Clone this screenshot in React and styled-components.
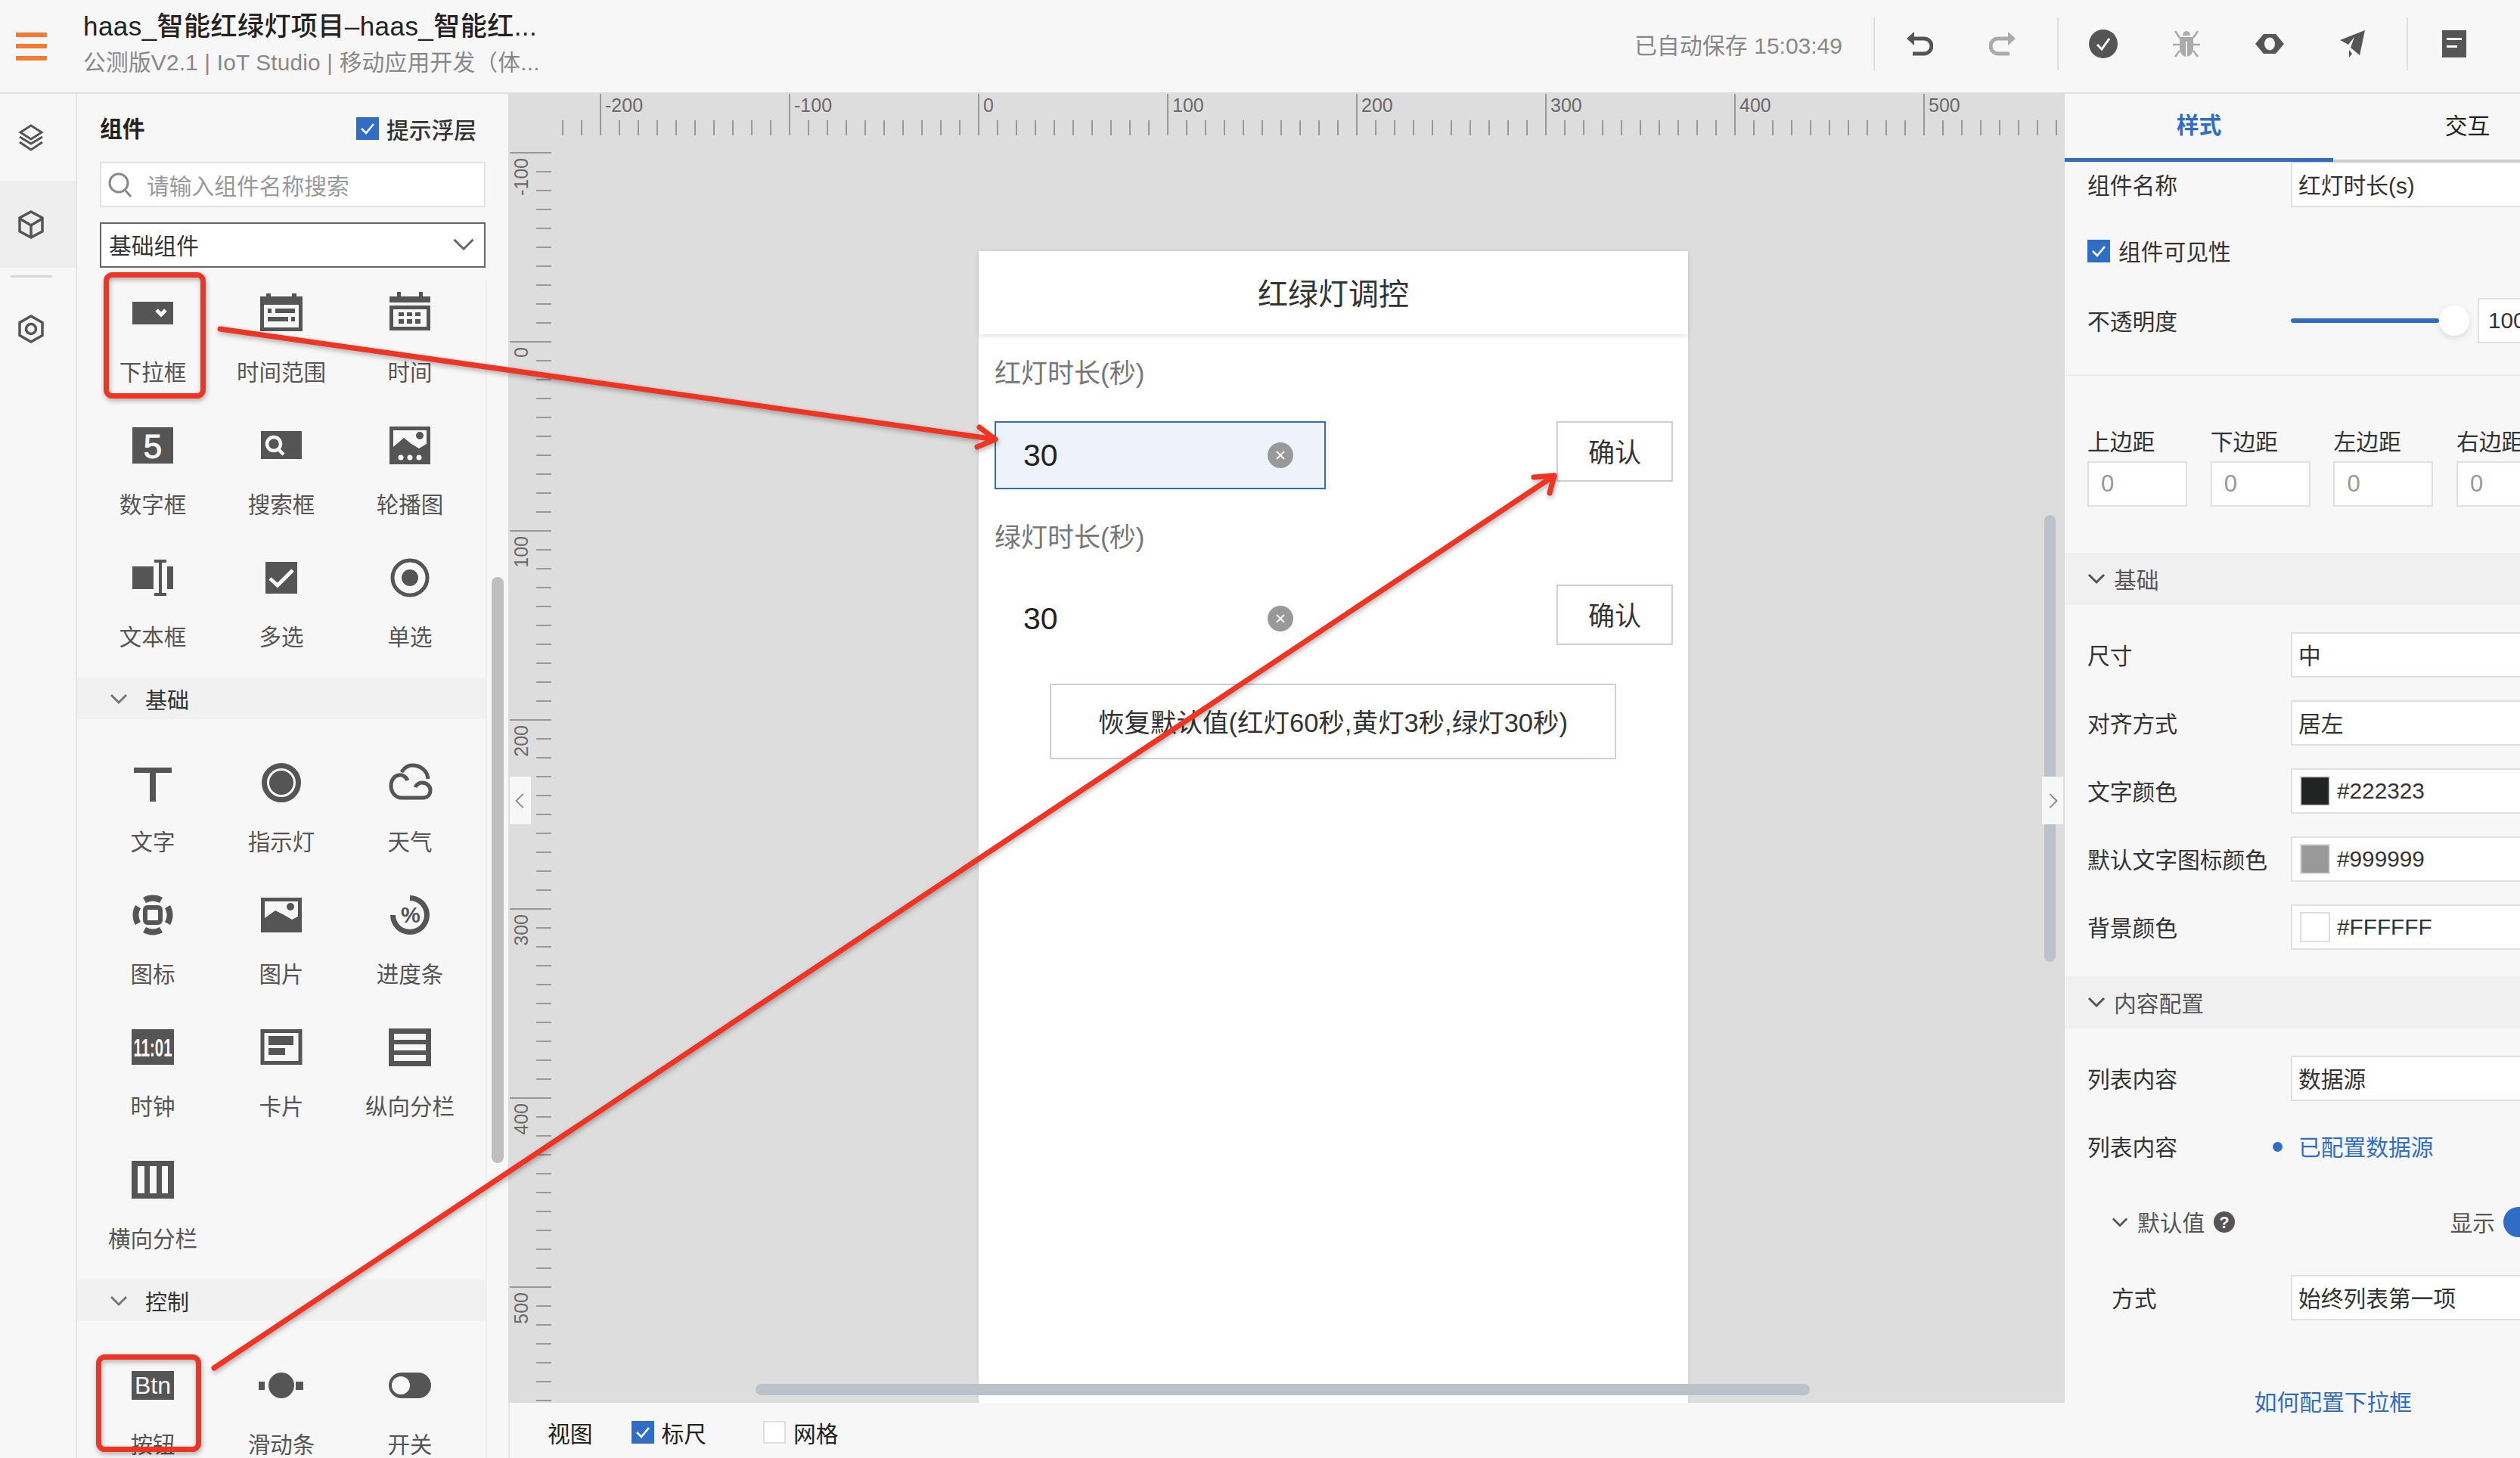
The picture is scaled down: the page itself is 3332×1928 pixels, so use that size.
import React from 'react';
import styled, { createGlobalStyle } from 'styled-components';

const BLUE = '#2f6dc6';
const FONT = '"Liberation Sans", "Noto Sans CJK SC", sans-serif';

const GlobalStyle = createGlobalStyle`
  html, body {
    margin: 0;
    padding: 0;
    background: #f7f7f7;
  }
  body {
    font-family: ${FONT};
    font-size: 29.75px;
    color: #333;
  }
  * {
    box-sizing: border-box;
  }
`;

const Page = styled.div`
  position: relative;
  width: 3332px;
  height: 1928px;
  overflow: hidden;
  display: flex;
  flex-direction: column;
`;

/* top bar */
const TopBar = styled.header`
  flex: none;
  height: 124px;
  display: flex;
  align-items: flex-start;
  padding: 0 32px 0 21px;
  background: #f7f7f7;
  border-bottom: 2px solid #e0e0e0;
`;

const MenuIcon = styled.svg`
  flex: none;
  margin: 43px 48px 0 0;
`;

const TitleBlock = styled.div`
  padding-top: 12px;
  white-space: nowrap;
`;

const ProjectName = styled.div`
  font-size: 35px;
  font-weight: 500;
  line-height: 46px;
  letter-spacing: 0.45px;
  color: #222;
`;

const ProjectMeta = styled.div`
  font-size: 29.75px;
  line-height: 50px;
  letter-spacing: 0.2px;
  color: #888;
`;

const TopActions = styled.div`
  margin-left: auto;
  height: 116px;
  display: flex;
  align-items: center;
`;

const SaveTime = styled.span`
  font-size: 30px;
  color: #888;
  margin-right: 41px;
  white-space: nowrap;
`;

const TopDivider = styled.span`
  width: 2px;
  height: 70px;
  background: #e0e0e0;
`;

const TopButton = styled.span`
  width: 110px;
  display: flex;
  justify-content: center;
  align-items: center;
`;

const UndoGroup = styled.div`
  display: flex;
  padding: 0 17px 0 4px;
`;

const PreviewGroup = styled.div`
  display: flex;
  padding: 0 16px 0 4px;
`;

const DocGroup = styled.div`
  display: flex;
  padding-left: 6px;
`;

/* main columns */
const Workspace = styled.div`
  flex: 1;
  min-height: 0;
  display: flex;
`;

const Rail = styled.nav`
  flex: none;
  width: 102px;
  border-right: 2px solid #e6e6e6;
  background: #f7f7f7;
`;

const RailItem = styled.div`
  height: 115px;
  display: flex;
  align-items: center;
  justify-content: center;
  padding-right: 18px;
  background: ${p => (p.$active ? '#eeeeee' : 'transparent')};
  margin-top: ${p => p.$gap || 0}px;
`;

const RailDivider = styled.div`
  width: 55px;
  height: 3px;
  margin: 10px 0 0 14px;
  background: #d9d9d9;
`;

const Palette = styled.aside`
  position: relative;
  flex: none;
  width: 570px;
  display: flex;
  flex-direction: column;
  background: #f7f7f7;
`;

const PaletteTop = styled.div`
  flex: none;
  padding: 16px 30px 17px;
`;

const PaletteHead = styled.div`
  height: 60px;
  display: flex;
  align-items: center;
  justify-content: space-between;
  padding-right: 12px;
`;

const PaletteTitle = styled.span`
  padding-bottom: 4px;
  font-weight: 700;
  color: #222;
`;

const HintToggle = styled.label`
  display: flex;
  align-items: center;
  gap: 10px;
  font-weight: 500;
  color: #333;
`;

const Check = styled.span`
  flex: none;
  width: 30px;
  height: 30px;
  display: flex;
  align-items: center;
  justify-content: center;
  background: ${p => (p.$on ? BLUE : '#fff')};
  border: ${p => (p.$on ? 'none' : '2px solid #e0e0e0')};
`;

const SearchBox = styled.div`
  width: 510px;
  height: 60px;
  margin-top: 14px;
  display: flex;
  align-items: center;
  gap: 19px;
  padding-left: 9px;
  background: #fff;
  border: 2px solid #e2e2e2;
  color: #999;
`;

const SelectBox = styled.div`
  width: 510px;
  height: 60px;
  margin-top: 20px;
  display: flex;
  align-items: center;
  justify-content: space-between;
  padding: 0 12px 2px 10px;
  background: #fff;
  border: 2px solid #666;
  color: #333;
`;

const PaletteList = styled.div`
  flex: 1;
  min-height: 0;
  width: 542px;
  overflow: hidden;
  border-right: 2px solid #eeeeee;
`;

const PaletteGroup = styled.div`
  display: grid;
  grid-template-columns: repeat(3, 170px);
  padding: ${p => p.$top || 0}px 0 0 15px;
`;

const PaletteItem = styled.div`
  height: 175px;
  padding-top: 13px;
  display: flex;
  flex-direction: column;
  align-items: center;
  color: #555;
  font-size: 29.5px;
  line-height: 40px;
`;

const ItemLabel = styled.span`
  margin-top: 29px;
  white-space: nowrap;
`;

const GroupTitle = styled.div`
  height: 55px;
  display: flex;
  align-items: center;
  gap: 23px;
  padding-left: 43px;
  background: #f1f1f1;
  color: #333;
  font-size: 29px;
`;

const PaletteScroll = styled.div`
  position: absolute;
  left: 548px;
  top: 639px;
  width: 16px;
  height: 775px;
  border-radius: 8px;
  background: #bfbfbf;
`;

/* canvas */
const Canvas = styled.main`
  position: relative;
  flex: 1;
  min-width: 0;
  display: grid;
  grid-template-columns: 57px 1fr;
  grid-template-rows: 55px 1fr 73px;
  background: #dddddd;
`;

const RulerCorner = styled.div`
  grid-column: 1 / 3;
`;

const RulerText = styled.text`
  font-family: ${FONT};
  font-size: 25px;
  fill: #6a6a6a;
`;

const Stage = styled.div`
  min-height: 0;
  overflow: hidden;
  padding: 153px 0 0 565px;
`;

const Phone = styled.section`
  width: 938px;
  height: 1600px;
  background: #fff;
  box-shadow: 0 0 6px rgba(0, 0, 0, 0.06);
`;

const PhoneHead = styled.div`
  height: 110px;
  padding-bottom: 3px;
  display: flex;
  align-items: center;
  justify-content: center;
  font-size: 40px;
  color: #333;
  box-shadow: 0 3px 6px rgba(0, 0, 0, 0.1);
`;

const PhoneBody = styled.div`
  padding: 0 20px 0 21px;
`;

const FieldTitle = styled.div`
  margin-top: ${p => p.$top}px;
  font-size: 35px;
  line-height: 50px;
  color: #777;
`;

const InputRow = styled.div`
  margin-top: ${p => p.$top}px;
  display: flex;
  justify-content: space-between;
  align-items: flex-start;
`;

const PhoneInput = styled.div`
  width: 438px;
  height: 90px;
  display: flex;
  align-items: center;
  justify-content: space-between;
  padding: 0 41px 0 36px;
  font-size: 41px;
  color: #222;
  background: ${p => (p.$focus ? '#eef3fb' : 'transparent')};
  border: 2px solid ${p => (p.$focus ? BLUE : 'transparent')};
`;

const ClearIcon = styled.svg`
  flex: none;
`;

const ConfirmButton = styled.div`
  width: 154px;
  height: 80px;
  padding-bottom: 3px;
  display: flex;
  align-items: center;
  justify-content: center;
  font-size: 35px;
  color: #333;
  background: #fff;
  border: 2px solid #ccced8;
`;

const ResetButton = styled.div`
  width: 749px;
  height: 100px;
  margin: 41px 0 0 73px;
  padding-bottom: 3px;
  display: flex;
  align-items: center;
  justify-content: center;
  font-size: 34.5px;
  color: #333;
  white-space: nowrap;
  background: #fff;
  border: 2px solid #ccced8;
`;

const ViewBar = styled.div`
  grid-column: 1 / 3;
  display: flex;
  align-items: center;
  padding: 5px 0 0 50px;
  background: #f7f7f7;
  border-left: 2px solid #e6e6e6;
  color: #222;
`;

const ViewTitle = styled.span`
  margin-right: 51px;
`;

const ViewOption = styled.label`
  display: flex;
  align-items: center;
  gap: 10px;
  margin-right: 75px;
`;

const HScroll = styled.div`
  position: absolute;
  left: 327px;
  top: 1706px;
  width: 1394px;
  height: 15px;
  border-radius: 8px;
  background: #bcc2ca;
`;

const VScroll = styled.div`
  position: absolute;
  left: 2031px;
  top: 557px;
  width: 15px;
  height: 591px;
  border-radius: 8px;
  background: #bcc2ca;
`;

const Handle = styled.div`
  position: absolute;
  top: 903px;
  width: 28px;
  height: 63px;
  display: flex;
  align-items: center;
  justify-content: center;
  background: #f7f7f7;
  ${p => (p.$side === 'left' ? 'left: 2px;' : 'right: 2px;')}
`;

/* right panel */
const Inspector = styled.aside`
  flex: none;
  width: 602px;
  overflow: hidden;
  background: #f7f7f7;
`;

const InspectorInner = styled.div`
  width: 710px;
`;

const Tabs = styled.div`
  display: flex;
  height: 90px;
`;

const Tab = styled.div`
  width: 355px;
  height: 90px;
  display: flex;
  align-items: center;
  justify-content: center;
  padding-bottom: 7px;
  font-weight: ${p => (p.$active ? 700 : 400)};
  color: ${p => (p.$active ? BLUE : '#222')};
  border-bottom: ${p => (p.$active ? `5px solid ${BLUE}` : '3px solid #cccccc')};
`;

const Field = styled.div`
  height: 60px;
  margin-top: ${p => p.$top || 0}px;
  padding-left: ${p => p.$indent || 30}px;
  display: flex;
  align-items: center;
`;

const FieldLabel = styled.span`
  flex: none;
  width: ${p => p.$width || 269}px;
  padding-bottom: 3px;
  color: #333;
`;

const ValueBox = styled.div`
  flex: 1;
  height: 60px;
  display: flex;
  align-items: center;
  gap: 9px;
  padding: 0 0 ${p => (p.$swatch ? 0 : 3)}px ${p => (p.$swatch ? 10 : 8)}px;
  background: #fff;
  border: 2px solid #e0e0e0;
  color: #333;
  white-space: nowrap;
`;

const Swatch = styled.span`
  flex: none;
  width: 40px;
  height: 40px;
  background: ${p => p.$color};
  border: 2px solid #dddddd;
`;

const VisibleRow = styled.label`
  height: 30px;
  margin: 43px 0 47px;
  padding-left: 30px;
  display: flex;
  align-items: center;
  gap: 11px;
  color: #333;
`;

const VisibleText = styled.span`
  padding-bottom: 3px;
`;

const Slider = styled.div`
  flex: none;
  width: 236px;
  height: 60px;
  display: flex;
  align-items: center;
`;

const SliderFill = styled.div`
  flex: 1;
  height: 6px;
  border-radius: 3px;
  background: ${BLUE};
`;

const SliderKnob = styled.div`
  flex: none;
  width: 40px;
  height: 40px;
  border-radius: 50%;
  background: #fff;
  box-shadow: 0 3px 8px rgba(0, 0, 0, 0.12);
`;

const OpacityBox = styled(ValueBox)`
  margin-left: 11px;
  padding-left: 12px;
`;

const Divider = styled.div`
  height: 2px;
  margin-top: 41px;
  background: #eeeeee;
`;

const MarginGrid = styled.div`
  display: grid;
  grid-template-columns: repeat(4, 132px);
  column-gap: 30.7px;
  padding: 68px 0 0 30px;
`;

const MarginLabel = styled.div`
  line-height: 40px;
  color: #333;
`;

const MarginInput = styled.div`
  height: 60px;
  margin-top: 5px;
  display: flex;
  align-items: center;
  padding-left: 16px;
  background: #fff;
  border: 2px solid #e0e0e0;
  font-size: 31px;
  color: #999;
`;

const SectionTitle = styled.div`
  height: 69px;
  margin-top: ${p => p.$top}px;
  display: flex;
  align-items: center;
  gap: 11px;
  padding: 0 0 2px 30px;
  background: #f0f0f0;
  color: #555;
`;

const SectionBody = styled.div`
  padding-top: 36px;
  display: flex;
  flex-direction: column;
  gap: 30px;
`;

const SourceLink = styled.span`
  display: flex;
  align-items: center;
  gap: 21px;
  margin-left: -24px;
  padding-bottom: 3px;
  color: ${BLUE};
`;

const SourceDot = styled.span`
  width: 13px;
  height: 13px;
  margin-top: 3px;
  border-radius: 50%;
  background: ${BLUE};
`;

const DefaultRow = styled.div`
  height: 60px;
  margin-top: 40px;
  display: flex;
  align-items: center;
  padding: 0 50px 0 62px;
  color: #555;
`;

const DefaultTitle = styled.span`
  margin: 0 12px 3px 12px;
`;

const ShowLabel = styled.span`
  margin: 0 11px 3px auto;
`;

const ToggleOn = styled.div`
  width: 80px;
  height: 40px;
  border-radius: 20px;
  background: ${BLUE};
`;

const HelpLink = styled.div`
  margin-top: 89px;
  text-align: center;
  line-height: 40px;
  color: ${BLUE};
`;

/* red annotations laid over the screenshot */
const Annotations = styled.svg`
  position: absolute;
  left: 0;
  top: 0;
  pointer-events: none;
  filter: drop-shadow(1px 3px 3px rgba(0, 0, 0, 0.3));
`;

const ICONS = {
  select: (
    <>
      <rect x="3" y="15" width="54" height="30" fill="#555" />
      <path d="M35 26l6 6 6-6" fill="none" stroke="#f7f7f7" strokeWidth="5" />
    </>
  ),
  timeRange: (
    <>
      <path d="M2 8h8V4h6v4h28V4h6v4h8v46H2z" fill="#555" />
      <rect x="7" y="19" width="46" height="30" fill="#f7f7f7" />
      <path d="M12 24h5v6h-5zM22 24h26v6H22zM12 35h27v6H12zM43 35h5v6h-5z" fill="#555" />
    </>
  ),
  time: (
    <>
      <path d="M3 8h10V2h5v6h24V2h5v6h10v8H3z" fill="#555" />
      <path d="M3 20h54v33H3z M8 25v23h44V25z" fill="#555" fillRule="evenodd" />
      <path d="M15 29h7v5h-7zM26 29h7v5h-7zM37 29h7v5h-7zM15 38h7v6h-7zM26 38h7v6h-7zM37 38h7v6h-7z" fill="#555" />
    </>
  ),
  number: (
    <>
      <rect x="3" y="6" width="54" height="48" fill="#555" />
      <text x="30" y="47" textAnchor="middle" fontFamily={FONT} fontSize="44" fontWeight="500" stroke="#f7f7f7" strokeWidth="1" fill="#f7f7f7">5</text>
    </>
  ),
  search: (
    <>
      <rect x="3" y="11" width="54" height="37" fill="#555" />
      <circle cx="20" cy="28" r="9" fill="none" stroke="#f7f7f7" strokeWidth="4.5" />
      <path d="M26 35l7 7" stroke="#f7f7f7" strokeWidth="4.5" />
    </>
  ),
  carousel: (
    <>
      <rect x="3" y="5" width="54" height="50" fill="#555" />
      <path d="M8 10h44v18l-10 6-10-6-10-8-14 12z" fill="#f7f7f7" />
      <circle cx="43" cy="17" r="5" fill="#555" />
      <circle cx="18" cy="46" r="3.5" fill="#f7f7f7" />
      <circle cx="30" cy="46" r="3.5" fill="#f7f7f7" />
      <circle cx="42" cy="46" r="3.5" fill="#f7f7f7" />
    </>
  ),
  textarea: (
    <>
      <rect x="3" y="15" width="28" height="30" fill="#555" />
      <rect x="49" y="15" width="8" height="30" fill="#555" />
      <path d="M32 6h16v4h-6v40h6v4H32v-4h6V10h-6z" fill="#555" />
    </>
  ),
  checkbox: (
    <>
      <rect x="9" y="9" width="42" height="42" fill="#555" />
      <path d="M15 31l10 9 20-20" fill="none" stroke="#f7f7f7" strokeWidth="5" />
    </>
  ),
  radio: (
    <>
      <circle cx="30" cy="30" r="23" fill="none" stroke="#555" strokeWidth="5" />
      <circle cx="30" cy="30" r="11" fill="#555" />
    </>
  ),
  text: <path d="M5 10h50v7H34v38h-8V17H5z" fill="#555" />,
  lamp: (
    <>
      <circle cx="30" cy="30" r="22.5" fill="none" stroke="#555" strokeWidth="7" />
      <circle cx="30" cy="30" r="16" fill="#555" />
    </>
  ),
  weather: (
    <path
      d="M27 27c-2-5-7-8-12-7C9 21 5 27 5 34c0 9 6 16 14 16h28c6 0 10-4 10-10 0-6-5-10-11-10-4 0-8 3-9 6M19 16c3-5 8-9 14-9 11 0 20 7 21 18"
      fill="none"
      stroke="#555"
      strokeWidth="5"
    />
  ),
  icon: (
    <>
      <path d="M17 7a26 26 0 0 1 26 0l-4 7a18 18 0 0 0-18 0zM53 17a26 26 0 0 1 0 26l-7-4a18 18 0 0 0 0-18zM43 53a26 26 0 0 1-26 0l4-7a18 18 0 0 0 18 0zM7 43a26 26 0 0 1 0-26l7 4a18 18 0 0 0 0 18z" fill="#555" />
      <rect x="20" y="20" width="20" height="20" rx="3" fill="none" stroke="#555" strokeWidth="6" />
    </>
  ),
  image: (
    <>
      <rect x="3" y="7" width="54" height="46" fill="#555" />
      <path d="M8 12h44v20l-8 4-12-7-10-5-14 10z" fill="#f7f7f7" />
      <circle cx="42" cy="19" r="5" fill="#555" />
    </>
  ),
  progress: (
    <>
      <path d="M30 4a26 26 0 1 1-26 26h7a19 19 0 1 0 19-19z" fill="#555" />
      <text x="31" y="40" textAnchor="middle" fontFamily={FONT} fontSize="29" fontWeight="700" fill="#555">%</text>
    </>
  ),
  clock: (
    <>
      <rect x="2" y="6" width="56" height="47" fill="#555" />
      <text transform="translate(30 42) scale(0.6 1)" textAnchor="middle" fontFamily={FONT} fontSize="34" fontWeight="700" fill="#f7f7f7">11:01</text>
    </>
  ),
  card: (
    <>
      <rect x="5" y="8.5" width="50" height="42" fill="none" stroke="#555" strokeWidth="5" />
      <rect x="13" y="15" width="33" height="12" fill="#555" />
      <rect x="13" y="31" width="22" height="9" fill="#555" />
    </>
  ),
  rows: (
    <>
      <rect x="2" y="5" width="56" height="50" fill="#555" />
      <path d="M9 12h42v8H9zM9 26h42v8H9zM9 40h42v8H9z" fill="#f7f7f7" />
    </>
  ),
  columns: (
    <>
      <rect x="2" y="5" width="56" height="50" fill="#555" />
      <path d="M10 12h9v36h-9zM26 12h9v36h-9zM42 12h8v36h-8z" fill="#f7f7f7" />
    </>
  ),
  button: (
    <>
      <rect x="2" y="11" width="56" height="38" fill="#555" />
      <text x="30" y="41" textAnchor="middle" fontFamily={FONT} fontSize="32" fill="#f7f7f7">Btn</text>
    </>
  ),
  slider: (
    <>
      <circle cx="30" cy="30" r="17" fill="#555" />
      <rect x="0" y="25" width="8" height="11" fill="#555" />
      <rect x="49" y="25" width="10" height="11" fill="#555" />
    </>
  ),
  toggle: (
    <>
      <rect x="2" y="13" width="56" height="34" rx="17" fill="#555" />
      <circle cx="18" cy="30" r="12" fill="#f7f7f7" />
    </>
  ),
};

const ItemIcon = ({ name }) => (
  <svg width="60" height="60" viewBox="0 0 60 60">
    {ICONS[name]}
  </svg>
);

const Chevron = ({ size = 24, color = '#777', dir = 'down', width = 3 }) => {
  const d = {
    down: 'M2 7l10 10 10-10',
    left: 'M16 2L6 12l10 10',
    right: 'M8 2l10 10-10 10',
  }[dir];
  return (
    <svg width={size} height={size} viewBox="0 0 24 24">
      <path d={d} fill="none" stroke={color} strokeWidth={width} />
    </svg>
  );
};

const CheckMark = () => (
  <svg width="30" height="30" viewBox="0 0 30 30">
    <path d="M7 15l6 6 10-12" fill="none" stroke="#fff" strokeWidth="2.6" />
  </svg>
);

const Toggle = ({ on, children }) => (
  <>
    <Check $on={on}>{on && <CheckMark />}</Check>
    {children}
  </>
);

const Item = ({ icon, label }) => (
  <PaletteItem>
    <ItemIcon name={icon} />
    <ItemLabel>{label}</ItemLabel>
  </PaletteItem>
);

const GROUP_A = [
  ['select', '下拉框'], ['timeRange', '时间范围'], ['time', '时间'],
  ['number', '数字框'], ['search', '搜索框'], ['carousel', '轮播图'],
  ['textarea', '文本框'], ['checkbox', '多选'], ['radio', '单选'],
];
const GROUP_B = [
  ['text', '文字'], ['lamp', '指示灯'], ['weather', '天气'],
  ['icon', '图标'], ['image', '图片'], ['progress', '进度条'],
  ['clock', '时钟'], ['card', '卡片'], ['rows', '纵向分栏'],
  ['columns', '横向分栏'],
];
const GROUP_C = [['button', '按钮'], ['slider', '滑动条'], ['toggle', '开关']];

const range = (from, to, step) => {
  const out = [];
  for (let v = from; v <= to; v += step) out.push(v);
  return out;
};

const TopRuler = () => (
  <svg width="2058" height="55">
    {range(72, 2047, 25).map(x => {
      const major = (x - 122) % 250 === 0;
      return <rect key={x} x={x - 1} y={major ? 0 : 35} width="2" height={major ? 55 : 20} fill="#999" />;
    })}
    {range(122, 2047, 250).map((x, i) => (
      <RulerText key={x} x={x + 6} y="24">{-200 + i * 100}</RulerText>
    ))}
  </svg>
);

const LeftRuler = () => (
  <svg width="57" height="1676">
    {range(23, 1676, 25).map(y => {
      const major = (y - 23) % 250 === 0;
      return <rect key={y} x={major ? 2 : 37} y={y - 1} width={major ? 55 : 20} height="2" fill="#999" />;
    })}
    {range(23, 1676, 250).map((y, i) => (
      <RulerText key={y} transform={`translate(26 ${y + 7}) rotate(-90)`} textAnchor="end">
        {-100 + i * 100}
      </RulerText>
    ))}
  </svg>
);

const ClearButton = () => (
  <ClearIcon width="34" height="36" viewBox="0 0 34 36">
    <circle cx="17" cy="18" r="17" fill="#999" />
    <path d="M12 13l10 10M22 13L12 23" stroke="#fff" strokeWidth="2" />
  </ClearIcon>
);

const Arrow = ({ from, tip, wings }) => (
  <>
    <line x1={from[0]} y1={from[1]} x2={tip[0]} y2={tip[1]} />
    <polyline points={`${wings[0]} ${tip} ${wings[1]}`} />
  </>
);

const App = () => (
  <Page>
    <GlobalStyle />
    <TopBar>
      <MenuIcon width="41" height="37" viewBox="0 0 41 37">
        <path d="M0 0h41v6H0zM0 15h41v6H0zM0 31h41v6H0z" fill="#f47b30" />
      </MenuIcon>
      <TitleBlock>
        <ProjectName>haas_智能红绿灯项目–haas_智能红...</ProjectName>
        <ProjectMeta>公测版V2.1 | IoT Studio | 移动应用开发（体...</ProjectMeta>
      </TitleBlock>
      <TopActions>
        <SaveTime>已自动保存 15:03:49</SaveTime>
        <TopDivider />
        <UndoGroup>
          <TopButton>
            <svg width="36" height="34" viewBox="0 0 36 34">
              <path d="M1 10L11 1v18z" fill="#555" />
              <path d="M9 10h15a9.5 9.5 0 0 1 0 20H9" fill="none" stroke="#555" strokeWidth="5" />
            </svg>
          </TopButton>
          <TopButton>
            <svg width="36" height="34" viewBox="0 0 36 34">
              <path d="M35 10L25 1v18z" fill="#aaa" />
              <path d="M27 10H12a9.5 9.5 0 0 0 0 20h15" fill="none" stroke="#aaa" strokeWidth="5" />
            </svg>
          </TopButton>
        </UndoGroup>
        <TopDivider />
        <PreviewGroup>
          <TopButton>
            <svg width="38" height="38" viewBox="0 0 38 38">
              <circle cx="19" cy="19" r="19" fill="#555" />
              <path d="M11 20l6 6 10-14" fill="none" stroke="#fff" strokeWidth="3" />
            </svg>
          </TopButton>
          <TopButton>
            <svg width="36" height="36" viewBox="0 0 36 36">
              <path d="M13 7a5 6 0 0 1 10 0zM9 9h18v15a9 11 0 0 1-18 0z" fill="#aaa" />
              <path d="M3 1l6 9M33 1l-6 9M0 19h9M27 19h9M9 27l-6 8M27 27l6 8" stroke="#aaa" strokeWidth="2.5" />
              <path d="M18 15v20" stroke="#f7f7f7" strokeWidth="2" />
            </svg>
          </TopButton>
          <TopButton>
            <svg width="38" height="28" viewBox="0 0 38 28">
              <path d="M0 14L11 1h16l11 13-11 13H11z" fill="#555" />
              <ellipse cx="19" cy="14" rx="7" ry="8.5" fill="#f7f7f7" />
            </svg>
          </TopButton>
          <TopButton>
            <svg width="34" height="36" viewBox="0 0 34 36">
              <path d="M33 0L0 13l11 6 8-10-5 14 12 10z" fill="#555" />
              <path d="M12 26l4 5-4 5z" fill="#555" />
            </svg>
          </TopButton>
        </PreviewGroup>
        <TopDivider />
        <DocGroup>
          <TopButton>
            <svg width="32" height="36" viewBox="0 0 32 36">
              <rect width="32" height="36" fill="#555" />
              <path d="M6 10h20v3H6zM6 20h14v3H6z" fill="#f7f7f7" />
            </svg>
          </TopButton>
        </DocGroup>
      </TopActions>
    </TopBar>

    <Workspace>
      <Rail>
        <RailItem>
          <svg width="36" height="36" viewBox="0 0 36 36" fill="none" stroke="#555" strokeWidth="3">
            <path d="M18 2l14 9-14 9-14-9zM3 17l15 9 15-9M3 24l15 10 15-10" />
          </svg>
        </RailItem>
        <RailItem $active>
          <svg width="36" height="38" viewBox="0 0 36 38" fill="none" stroke="#555" strokeWidth="3.5">
            <path d="M18 2l15 8v18l-15 8-15-8V10zM3 11l15 9 15-9M18 20v16" />
          </svg>
        </RailItem>
        <RailDivider />
        <RailItem $gap={10}>
          <svg width="34" height="38" viewBox="0 0 34 38" fill="none" stroke="#555" strokeWidth="3.5">
            <path d="M17 2l15 8.5v17L17 36 2 27.5v-17z" />
            <circle cx="17" cy="19" r="6.5" />
          </svg>
        </RailItem>
      </Rail>

      <Palette>
        <PaletteTop>
          <PaletteHead>
            <PaletteTitle>组件</PaletteTitle>
            <HintToggle>
              <Toggle on>提示浮层</Toggle>
            </HintToggle>
          </PaletteHead>
          <SearchBox>
            <svg width="32" height="34" viewBox="0 0 32 34" fill="none" stroke="#888" strokeWidth="3">
              <circle cx="14" cy="15" r="12" />
              <path d="M23 25l7 8" />
            </svg>
            请输入组件名称搜索
          </SearchBox>
          <SelectBox>
            基础组件
            <Chevron size={30} color="#666" width={2.4} />
          </SelectBox>
        </PaletteTop>
        <PaletteList>
          <PaletteGroup>
            {GROUP_A.map(([icon, label]) => <Item key={label} icon={icon} label={label} />)}
          </PaletteGroup>
          <GroupTitle><Chevron />基础</GroupTitle>
          <PaletteGroup $top={41}>
            {GROUP_B.map(([icon, label]) => <Item key={label} icon={icon} label={label} />)}
          </PaletteGroup>
          <GroupTitle><Chevron />控制</GroupTitle>
          <PaletteGroup $top={42}>
            {GROUP_C.map(([icon, label]) => <Item key={label} icon={icon} label={label} />)}
          </PaletteGroup>
        </PaletteList>
        <PaletteScroll />
      </Palette>

      <Canvas>
        <RulerCorner>
          <TopRuler />
        </RulerCorner>
        <LeftRuler />
        <Stage>
          <Phone>
            <PhoneHead>红绿灯调控</PhoneHead>
            <PhoneBody>
              <FieldTitle $top={27}>红灯时长(秒)</FieldTitle>
              <InputRow $top={38}>
                <PhoneInput $focus>
                  30
                  <ClearButton />
                </PhoneInput>
                <ConfirmButton>确认</ConfirmButton>
              </InputRow>
              <FieldTitle $top={39}>绿灯时长(秒)</FieldTitle>
              <InputRow $top={37}>
                <PhoneInput>
                  30
                  <ClearButton />
                </PhoneInput>
                <ConfirmButton>确认</ConfirmButton>
              </InputRow>
              <ResetButton>恢复默认值(红灯60秒,黄灯3秒,绿灯30秒)</ResetButton>
            </PhoneBody>
          </Phone>
        </Stage>
        <ViewBar>
          <ViewTitle>视图</ViewTitle>
          <ViewOption>
            <Toggle on>标尺</Toggle>
          </ViewOption>
          <ViewOption>
            <Toggle>网格</Toggle>
          </ViewOption>
        </ViewBar>
        <HScroll />
        <VScroll />
        <Handle $side="left">
          <Chevron size={22} color="#888" dir="left" width={2} />
        </Handle>
        <Handle $side="right">
          <Chevron size={22} color="#888" dir="right" width={2} />
        </Handle>
      </Canvas>

      <Inspector>
        <InspectorInner>
          <Tabs>
            <Tab $active>样式</Tab>
            <Tab>交互</Tab>
          </Tabs>
          <Field>
            <FieldLabel>组件名称</FieldLabel>
            <ValueBox>红灯时长(s)</ValueBox>
          </Field>
          <VisibleRow>
            <Toggle on><VisibleText>组件可见性</VisibleText></Toggle>
          </VisibleRow>
          <Field>
            <FieldLabel>不透明度</FieldLabel>
            <Slider>
              <SliderFill />
              <SliderKnob />
            </Slider>
            <OpacityBox $swatch>100</OpacityBox>
          </Field>
          <Divider />
          <MarginGrid>
            {['上边距', '下边距', '左边距', '右边距'].map(label => (
              <div key={label}>
                <MarginLabel>{label}</MarginLabel>
                <MarginInput>0</MarginInput>
              </div>
            ))}
          </MarginGrid>
          <SectionTitle $top={61}>
            <Chevron color="#555" />
            基础
          </SectionTitle>
          <SectionBody>
            <Field>
              <FieldLabel>尺寸</FieldLabel>
              <ValueBox>中</ValueBox>
            </Field>
            <Field>
              <FieldLabel>对齐方式</FieldLabel>
              <ValueBox>居左</ValueBox>
            </Field>
            <Field>
              <FieldLabel>文字颜色</FieldLabel>
              <ValueBox $swatch><Swatch $color="#222323" />#222323</ValueBox>
            </Field>
            <Field>
              <FieldLabel>默认文字图标颜色</FieldLabel>
              <ValueBox $swatch><Swatch $color="#999999" />#999999</ValueBox>
            </Field>
            <Field>
              <FieldLabel>背景颜色</FieldLabel>
              <ValueBox $swatch><Swatch $color="#ffffff" />#FFFFFF</ValueBox>
            </Field>
          </SectionBody>
          <SectionTitle $top={35}>
            <Chevron color="#555" />
            内容配置
          </SectionTitle>
          <SectionBody>
            <Field>
              <FieldLabel>列表内容</FieldLabel>
              <ValueBox>数据源</ValueBox>
            </Field>
            <Field>
              <FieldLabel>列表内容</FieldLabel>
              <SourceLink>
                <SourceDot />
                已配置数据源
              </SourceLink>
            </Field>
          </SectionBody>
          <DefaultRow>
            <Chevron size={22} color="#555" />
            <DefaultTitle>默认值</DefaultTitle>
            <svg width="28" height="28" viewBox="0 0 28 28">
              <circle cx="14" cy="14" r="14" fill="#555" />
              <text x="14" y="22" textAnchor="middle" fontFamily={FONT} fontSize="22" fontWeight="700" fill="#f7f7f7">?</text>
            </svg>
            <ShowLabel>显示</ShowLabel>
            <ToggleOn />
          </DefaultRow>
          <Field $top={40} $indent={62}>
            <FieldLabel $width={237}>方式</FieldLabel>
            <ValueBox>始终列表第一项</ValueBox>
          </Field>
          <HelpLink>如何配置下拉框</HelpLink>
        </InspectorInner>
      </Inspector>
    </Workspace>

    <Annotations width="3332" height="1928" viewBox="0 0 3332 1928" fill="none" stroke="#ee3524" strokeWidth="7" strokeLinecap="round" strokeLinejoin="round">
      <rect x="140.5" y="363.5" width="128" height="160" rx="8" />
      <rect x="130.5" y="1794.5" width="132" height="122" rx="8" />
      <Arrow from={[291, 435]} tip={[1316, 581]} wings={[[1295, 565], [1292, 591]]} />
      <Arrow from={[283, 1809]} tip={[2055, 629]} wings={[[2028, 631], [2049, 652]]} />
    </Annotations>
  </Page>
);

export default App;
